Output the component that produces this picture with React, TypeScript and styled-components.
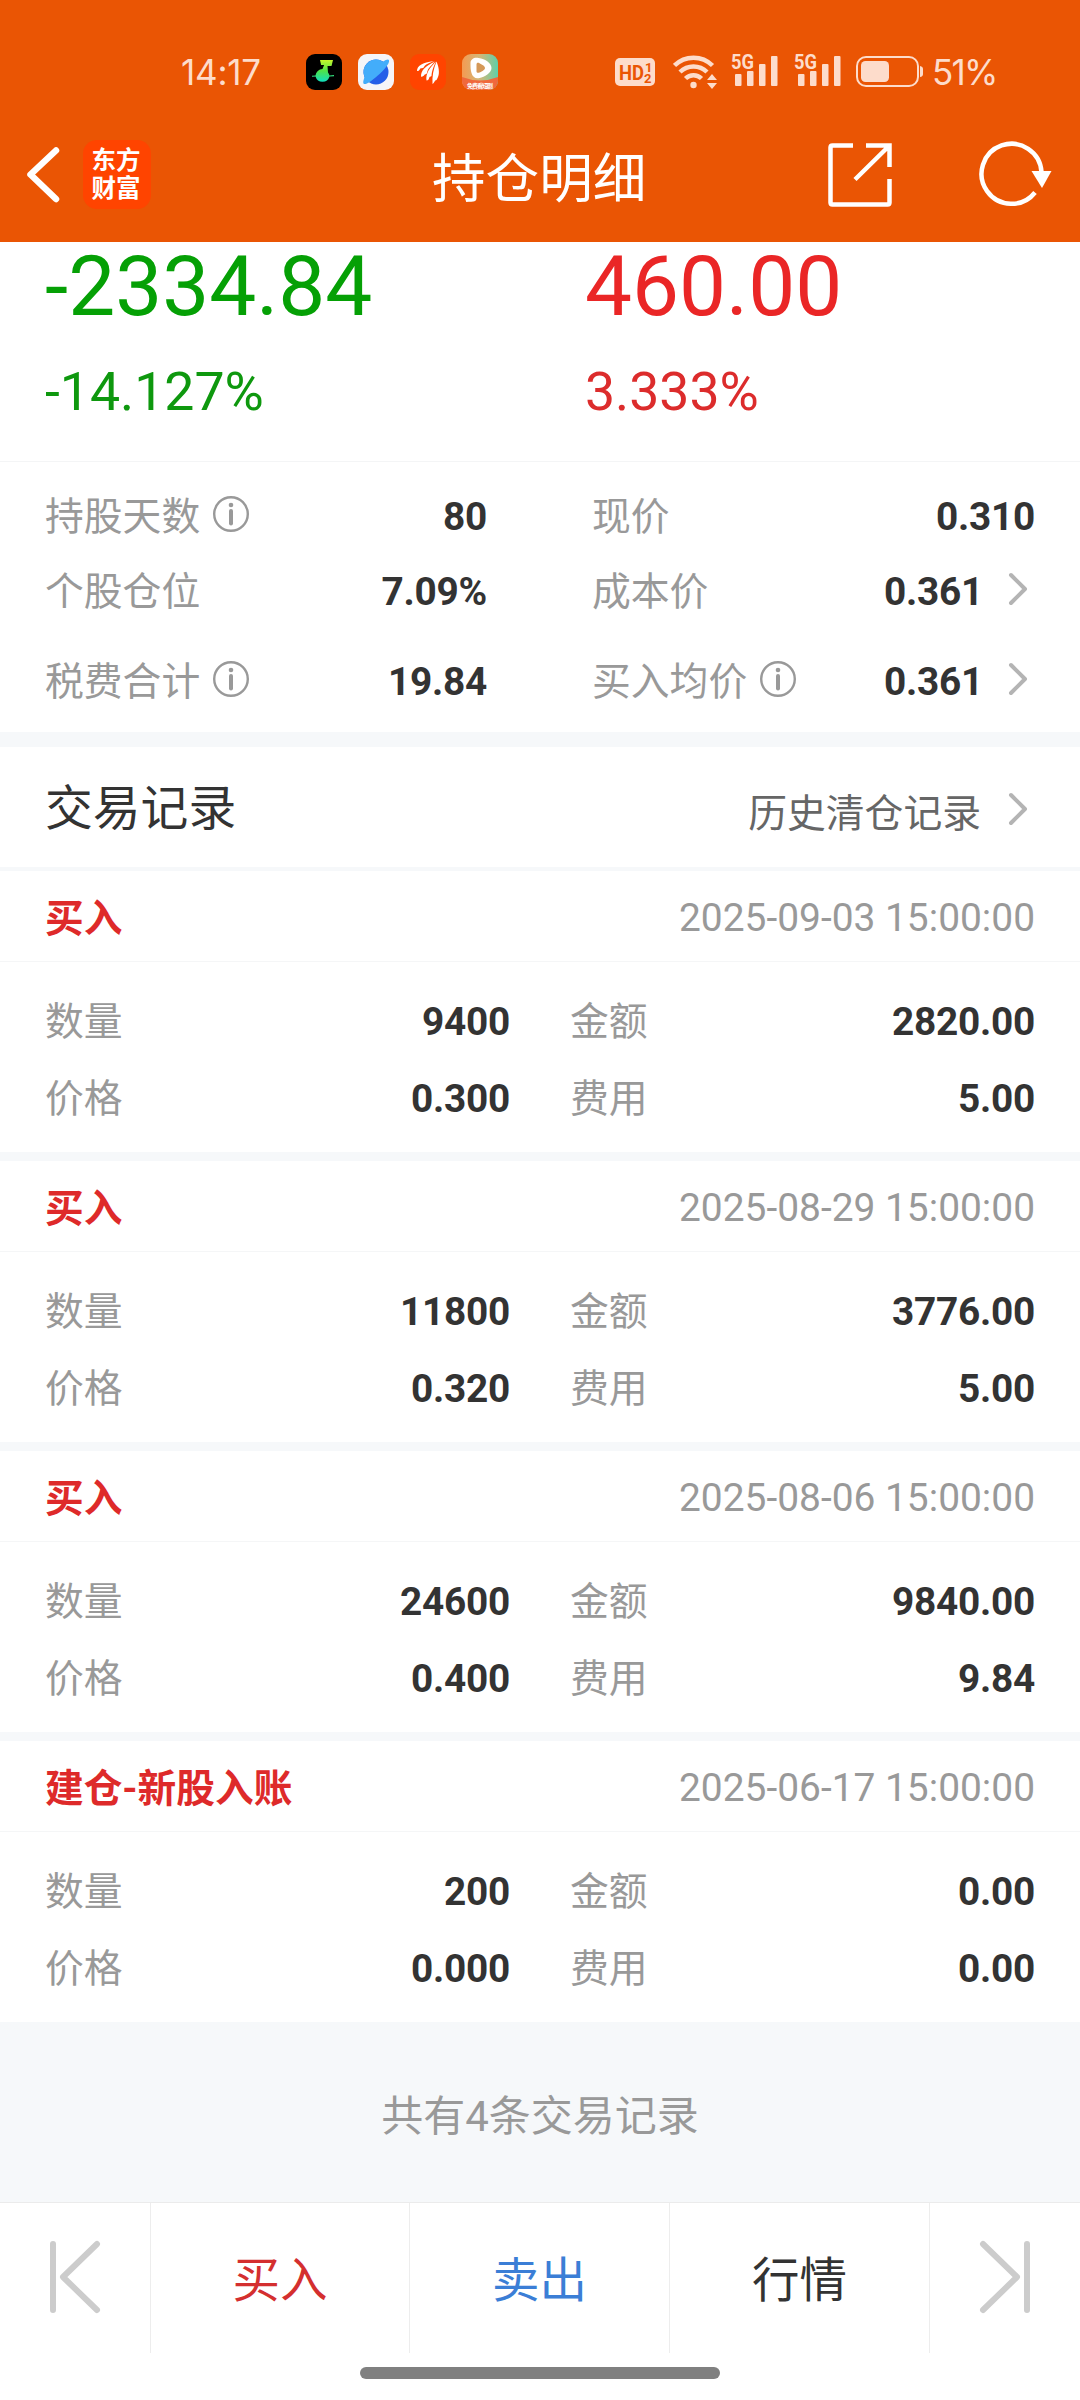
import React from "react";
import styled, { createGlobalStyle } from "styled-components";

const GlobalStyle = createGlobalStyle`
  * { box-sizing: border-box; }
  body { margin: 0; background: #fff; }
`;

const TINT = "#fddccb";

const Page = styled.div`
  width: 1080px;
  height: 2400px;
  display: flex;
  flex-direction: column;
  overflow: hidden;
  background: #fff;
  color: #333;
  font-family: Roboto, "Noto Sans CJK SC", sans-serif;
`;

/* Header */
const Header = styled.header`
  height: 242px;
  flex: none;
  background: #ea5504;
`;
const StatusBar = styled.div`
  height: 144px;
  padding: 0 85px 0 181px;
  display: flex;
  align-items: center;
  color: ${TINT};
`;
const StatusText = styled.span<{ $width: number; $spacing: number }>`
  width: ${(p) => p.$width}px;
  font: 400 35px/40px Inter, sans-serif;
  letter-spacing: ${(p) => p.$spacing}px;
  white-space: nowrap;
`;
const AppIcons = styled.div`
  display: flex;
  gap: 16px;
  margin-left: 43px;
`;
const StatusIcons = styled.div`
  display: flex;
  align-items: center;
  margin-left: auto;
`;
const NavBar = styled.div`
  height: 98px;
  display: grid;
  grid-template-columns: 1fr 216px 1fr;
`;
const NavSide = styled.div<{ $end?: boolean }>`
  display: flex;
  align-items: flex-start;
  justify-content: ${(p) => (p.$end ? "flex-end" : "flex-start")};
`;
const BackIcon = styled.svg`
  margin: 1px 0 0 24px;
`;
const Brand = styled.div`
  width: 68px;
  height: 69px;
  margin: -4px 0 0 21px;
  padding: 5px 2px 0 0;
  border-radius: 14px;
  background: #ff4400;
  color: #fff;
  text-align: center;
  font: 700 24.500px/28px "Noto Sans CJK SC", sans-serif;
`;
const BrandLine = styled.div`
  height: 28px;
`;
const Title = styled.h1`
  margin: 1px 0 0;
  color: #fff;
  font-size: 53.600px;
  font-weight: 400;
  line-height: 70px;
  white-space: nowrap;
`;
const ShareIcon = styled.svg`
  margin: -3px 84px 0 0;
`;
const RefreshIcon = styled.svg`
  margin: -3px 28px 0 0;
`;

/* Profit summary */
const Summary = styled.section`
  height: 220px;
  flex: none;
  padding: 2px 45px 0;
  display: grid;
  grid-template-columns: 540px 1fr;
  border-bottom: 1px solid #f4f5f6;
`;
const Profit = styled.div`
  min-width: 0;
`;
const ProfitAmount = styled.div<{ $loss?: boolean }>`
  color: ${(p) => (p.$loss ? "#05a005" : "#ea2626")};
  font-size: 83.700px;
  line-height: 84px;
`;
const ProfitRate = styled.div<{ $loss?: boolean }>`
  margin-top: 34px;
  color: ${(p) => (p.$loss ? "#0e980e" : "#dc2c2c")};
  font-size: 53.600px;
  line-height: 60px;
`;

/* Position stats */
const Stats = styled.section`
  height: 270px;
  flex: none;
  padding: 25px 45px 0;
`;
const StatRow = styled.div<{ $gap: number }>`
  height: 60px;
  margin-top: ${(p) => p.$gap}px;
  display: grid;
  grid-template-columns: 442px 443px;
  column-gap: 105px;
  font-size: 38.800px;
  line-height: 60px;
`;
const Cell = styled.div`
  display: flex;
  justify-content: space-between;
`;
const Label = styled.span`
  display: flex;
  color: #999;
`;
const Value = styled.span`
  display: flex;
  font-weight: 700;
  letter-spacing: -0.25px;
`;
const InfoSvg = styled.svg`
  margin: 8px 0 0 12px;
`;
const ArrowSvg = styled.svg`
  margin: 10px 6px 0 24px;
`;

const Band = styled.div<{ $height: number }>`
  height: ${(p) => p.$height}px;
  flex: none;
  background: #f6f8fa;
`;

/* Trade records */
const SectionHead = styled.div`
  height: 120px;
  flex: none;
  padding: 0 47px 0 45px;
  display: flex;
  justify-content: space-between;
`;
const SectionTitle = styled.h2`
  margin: 0;
  font-size: 47.800px;
  font-weight: 400;
  line-height: 125px;
`;
const HistoryLink = styled.a`
  display: flex;
  color: #666;
  font-size: 38.800px;
  line-height: 133px;
`;
const HistoryArrow = styled(ArrowSvg)`
  margin: 45px 4px 0 26px;
`;
const Record = styled.article`
  height: 281px;
  flex: none;
`;
const RecordHead = styled.div`
  height: 91px;
  padding: 2px 45px 0;
  display: flex;
  justify-content: space-between;
  border-bottom: 1px solid #f5f6f7;
  font-size: 38.900px;
  line-height: 90px;
`;
const Kind = styled.span`
  color: #de2a2a;
  font-size: 38.700px;
  font-weight: 700;
  line-height: 92px;
`;
const Time = styled.time`
  color: #999;
`;
const RecordBody = styled.div`
  padding: 21px 45px 0;
  display: grid;
  grid-template-columns: 465px 465px;
  column-gap: 60px;
  grid-auto-rows: 77px;
  font-size: 38.800px;
  line-height: 77px;
`;
const Total = styled.div`
  height: 180px;
  flex: none;
  background: #f6f8fa;
  color: #999;
  text-align: center;
  font-size: 42px;
  line-height: 189px;
`;

/* Bottom bar */
const Actions = styled.nav`
  height: 151px;
  flex: none;
  display: grid;
  grid-template-columns: 151px 259px 260px 260px 150px;
  border-top: 1px solid #ebebeb;
`;
const Action = styled.button<{ $color?: string }>`
  display: flex;
  justify-content: center;
  padding: 37px 0 0;
  border: 0;
  border-right: 1px solid #ededed;
  background: #fff;
  color: ${(p) => p.$color || "#ccc"};
  font: 400 47.500px/82px Roboto, "Noto Sans CJK SC", sans-serif;
  &:last-child { border-right: 0; }
`;
const HomeArea = styled.div`
  flex: 1;
  padding-top: 14px;
`;
const HomeIndicator = styled.div`
  width: 360px;
  height: 12px;
  margin: 0 auto;
  border-radius: 6px;
  background: #808080;
`;

const Info = () => (
  <InfoSvg width="38" height="38" viewBox="0 0 38 38" fill="none" stroke="#999">
    <circle cx="19" cy="19" r="16.8" strokeWidth="2.4" />
    <circle cx="19" cy="10" r="2.3" fill="#999" stroke="none" />
    <path d="M19 16v12.5" strokeWidth="4" strokeLinecap="round" />
  </InfoSvg>
);

const chevron = (
  <path d="M4 3l14 14L4 31" fill="none" stroke="#b4b4b4" strokeWidth="4" strokeLinecap="round" strokeLinejoin="round" />
);

const SignalSvg = styled.svg`
  margin-right: 15px;
`;

const Signal = () => (
  <SignalSvg width="48" height="52" viewBox="0 -8 48 52" fill={TINT}>
    <text x="0" y="15" fontFamily="Roboto, sans-serif" fontWeight="700" fontSize="20" textLength="23" lengthAdjust="spacingAndGlyphs">5G</text>
    <rect x="4" y="20" width="6.5" height="12" rx="1" />
    <rect x="16" y="17" width="6.5" height="15" rx="1" />
    <rect x="28" y="10" width="6.5" height="22" rx="1" />
    <rect x="40" y="2" width="6.5" height="30" rx="1" />
  </SignalSvg>
);

const MusicApp = () => (
  <svg width="36" height="36" viewBox="0 0 36 36">
    <defs>
      <linearGradient id="music" x1="0" y1="0" x2="0" y2="1">
        <stop offset="0" stopColor="#c8f52a" />
        <stop offset=".5" stopColor="#4de34a" />
        <stop offset="1" stopColor="#10e0c0" />
      </linearGradient>
    </defs>
    <rect width="36" height="36" rx="9" fill="#000" />
    <path d="M14 6h13l-1.500 6h-4l.5 6.500a7.300 7.300 0 0 1 1.500 3l4.500-.5v1.300l-4.500.3a7.300 7.300 0 0 1-14 0L6 22.800v-1l3.500-.2a7.300 7.300 0 0 1 7-6.600l1.600-4h-3z" fill="url(#music)" />
  </svg>
);

const PlanetApp = () => (
  <svg width="36" height="36" viewBox="0 0 36 36">
    <rect width="36" height="36" rx="9" fill="#f5f5f8" />
    <circle cx="18" cy="18" r="12.500" fill="#245ee8" />
    <path d="M6.500 23A12.500 12.500 0 0 1 25 7.700c3-2.200 5.500-3 6-1.500 1 3-5 10-11.500 15.500C13 27.500 7 31.500 5.500 29.500c-.8-1.200.2-3.700 1-6.500z" fill="#43adfa" />
  </svg>
);

const FeatherApp = () => (
  <svg width="36" height="36" viewBox="0 0 36 36">
    <rect width="36" height="36" rx="9" fill="#ff4400" />
    <g fill="#fff">
      <path d="M7 17c0-5 5-8.500 17-10-5 2.500-8 2.500-10 6-1 2-3 .500-4 2s-1 2-3 2z" />
      <path d="M11 22.500c0-6 4-10.500 14-15-5 5.500-7 6.500-8 11.500-.8 2-2 .5-3 2.500-.8 1-2 1.500-3 1z" />
      <path d="M16.500 26.500c-1-7 3-12.500 9.500-19-3 6.500-4 9-4.500 14.500-.8 1-2 0-2.500 2.500-.5 1-1 2-2.500 2z" />
      <path d="M22.500 30c-.5-8 1-15 4-22.500C29.500 15 30 21 26.500 26c-2 0-2 3-4 4z" />
    </g>
  </svg>
);

const VideoApp = () => (
  <svg width="36" height="36" viewBox="0 0 36 36">
    <defs>
      <linearGradient id="video" x1="0" y1=".3" x2="1" y2=".3">
        <stop offset="0" stopColor="#f59a52" />
        <stop offset=".5" stopColor="#d2b878" />
        <stop offset="1" stopColor="#5ed0aa" />
      </linearGradient>
      <clipPath id="videoClip"><rect width="36" height="36" rx="9" /></clipPath>
    </defs>
    <g clipPath="url(#videoClip)">
      <rect width="36" height="36" fill="url(#video)" />
      <path d="M0 23q18 7 36 0v13H0z" fill="#f0683c" />
      <path d="M8.500 9c0-4 4-6 8-5 7 1 13 5 13 10s-7 9-12 10c-4 1-7-1-8-5-1-3-1-6-1-10z" fill="#fff" />
      <path d="M14.500 10.500c0-1.800 1.500-2 3-1.200 2 1 5.500 2.700 5.500 4.700s-3.500 3.700-5.500 4.500c-1.500.6-3 .3-3-1.300z" fill="#d59858" />
      <text x="5" y="33.500" fontFamily="Noto Sans CJK SC, sans-serif" fontWeight="700" fontSize="6" textLength="26" fill="#fff">免费看短剧</text>
    </g>
  </svg>
);

const HdIcon = styled.svg`
  margin-right: 18px;
`;
const WifiIcon = styled.svg`
  margin-right: 12px;
`;
const BatteryIcon = styled.svg`
  margin: 0 8px 0 -1px;
`;

const StatusRight = () => (
  <StatusIcons>
    <HdIcon width="40" height="28" viewBox="0 0 40 28">
      <rect width="40" height="28" rx="5" fill={TINT} />
      <g fontFamily="Roboto, sans-serif" fontWeight="700" fill="#ea5504">
        <text x="4" y="21.500" fontSize="21" textLength="25" lengthAdjust="spacingAndGlyphs">HD</text>
        <text x="30" y="13.500" fontSize="13">1</text>
        <text x="29" y="25" fontSize="13">2</text>
      </g>
    </HdIcon>
    <WifiIcon width="46" height="36" viewBox="0 0 46 36" fill="none" stroke={TINT} strokeWidth="4.500">
      <path d="M1.500 11.500a27 27 0 0 1 38 0M7 18a19.500 19.500 0 0 1 27 0M12.500 24.500a11.500 11.500 0 0 1 16 0" />
      <circle cx="20.500" cy="31" r="3.200" fill={TINT} stroke="none" />
      <path d="M34 26h10l-5-6zM34 29h10l-5 6z" fill={TINT} stroke="none" />
    </WifiIcon>
    <Signal />
    <Signal />
    <BatteryIcon width="68" height="32" viewBox="0 0 68 32">
      <rect x="1" y="1" width="61" height="29" rx="9" fill="none" stroke={TINT} strokeWidth="2" />
      <rect x="5" y="5" width="28" height="21" rx="4.500" fill={TINT} />
      <path d="M64 10q3 .5 3 3v5q0 2.500-3 3z" fill={TINT} />
    </BatteryIcon>
    <StatusText $width={63} $spacing={-1.7}>51%</StatusText>
  </StatusIcons>
);

const stats = [
  { gap: 0, left: ["持股天数", "80", true], right: ["现价", "0.310", false, false] },
  { gap: 15, left: ["个股仓位", "7.09%", false], right: ["成本价", "0.361", false, true] },
  { gap: 30, left: ["税费合计", "19.84", true], right: ["买入均价", "0.361", true, true] },
] as const;

const records = [
  { kind: "买入", time: "2025-09-03 15:00:00", fields: [["数量", "9400"], ["金额", "2820.00"], ["价格", "0.300"], ["费用", "5.00"]] },
  { kind: "买入", time: "2025-08-29 15:00:00", fields: [["数量", "11800"], ["金额", "3776.00"], ["价格", "0.320"], ["费用", "5.00"]] },
  { kind: "买入", time: "2025-08-06 15:00:00", fields: [["数量", "24600"], ["金额", "9840.00"], ["价格", "0.400"], ["费用", "9.84"]] },
  { kind: "建仓-新股入账", time: "2025-06-17 15:00:00", fields: [["数量", "200"], ["金额", "0.00"], ["价格", "0.000"], ["费用", "0.00"]] },
];

export default function App() {
  return (
    <Page>
      <GlobalStyle />
      <Header>
        <StatusBar>
          <StatusText $width={82} $spacing={-0.2}>14:17</StatusText>
          <AppIcons>
            <MusicApp />
            <PlanetApp />
            <FeatherApp />
            <VideoApp />
          </AppIcons>
          <StatusRight />
        </StatusBar>
        <NavBar>
          <NavSide>
            <BackIcon width="38" height="60" viewBox="0 0 38 60" fill="none" stroke="#fff" strokeWidth="6.500" strokeLinecap="round" strokeLinejoin="round">
              <path d="M32 5.500L6.500 29.500 32 54" />
            </BackIcon>
            <Brand>
              <BrandLine>东方</BrandLine>
              <BrandLine>财富</BrandLine>
            </Brand>
          </NavSide>
          <Title>持仓明细</Title>
          <NavSide $end>
            <ShareIcon width="68" height="68" viewBox="0 0 68 68" fill="none" stroke="#fff" strokeWidth="4.500">
              <path d="M27 4.500H6.500q-2 0-2 2v55q0 2 2 2h55q2 0 2-2V38" />
              <path d="M40 4.500h23.500V26M63 5L29 38.500" />
            </ShareIcon>
            <RefreshIcon width="74" height="68" viewBox="0 0 74 68" fill="none">
              <path d="M57 51.500A30 30 0 1 1 63.500 31" stroke="#fff" strokeWidth="4.500" />
              <path d="M53.500 30h20L64 47z" fill="#fff" />
            </RefreshIcon>
          </NavSide>
        </NavBar>
      </Header>

      <Summary>
        <Profit>
          <ProfitAmount $loss>-2334.84</ProfitAmount>
          <ProfitRate $loss>-14.127%</ProfitRate>
        </Profit>
        <Profit>
          <ProfitAmount>460.00</ProfitAmount>
          <ProfitRate>3.333%</ProfitRate>
        </Profit>
      </Summary>

      <Stats>
        {stats.map(({ gap, left, right }) => (
          <StatRow key={left[0]} $gap={gap}>
            <Cell>
              <Label>{left[0]}{left[2] && <Info />}</Label>
              <Value>{left[1]}</Value>
            </Cell>
            <Cell>
              <Label>{right[0]}{right[2] && <Info />}</Label>
              <Value>
                {right[1]}
                {right[3] && <ArrowSvg width="22" height="34" viewBox="0 0 22 34">{chevron}</ArrowSvg>}
              </Value>
            </Cell>
          </StatRow>
        ))}
      </Stats>

      <Band $height={15} />
      <SectionHead>
        <SectionTitle>交易记录</SectionTitle>
        <HistoryLink>
          历史清仓记录
          <HistoryArrow width="22" height="34" viewBox="0 0 22 34">{chevron}</HistoryArrow>
        </HistoryLink>
      </SectionHead>
      <Band $height={4} />

      {records.map((record, index) => (
        <React.Fragment key={record.time}>
          {index > 0 && <Band $height={9} />}
          <Record>
            <RecordHead>
              <Kind>{record.kind}</Kind>
              <Time>{record.time}</Time>
            </RecordHead>
            <RecordBody>
              {record.fields.map(([label, value]) => (
                <Cell key={label}>
                  <Label>{label}</Label>
                  <Value>{value}</Value>
                </Cell>
              ))}
            </RecordBody>
          </Record>
        </React.Fragment>
      ))}

      <Total>共有4条交易记录</Total>

      <Actions>
        <Action aria-label="上一个">
          <svg width="58" height="76" viewBox="0 0 58 76" fill="none" stroke="#ccc" strokeWidth="6" strokeLinecap="round" strokeLinejoin="round">
            <path d="M7 4v66M51 4L17 37l34 33" />
          </svg>
        </Action>
        <Action $color="#d42f2f">买入</Action>
        <Action $color="#3b7ed6">卖出</Action>
        <Action $color="#333">行情</Action>
        <Action aria-label="下一个">
          <svg width="58" height="76" viewBox="0 0 58 76" fill="none" stroke="#ccc" strokeWidth="6" strokeLinecap="round" strokeLinejoin="round">
            <path d="M51 4v66M7 4l34 33L7 70" />
          </svg>
        </Action>
      </Actions>
      <HomeArea>
        <HomeIndicator />
      </HomeArea>
    </Page>
  );
}
